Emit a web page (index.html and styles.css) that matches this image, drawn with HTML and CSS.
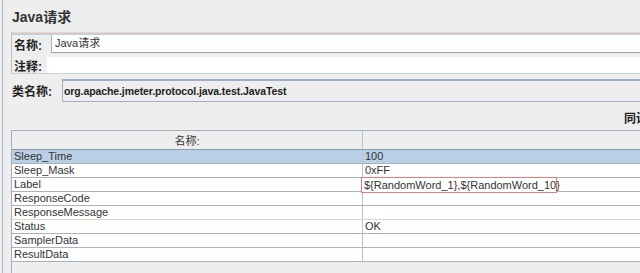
FILE: index.html
```html
<!DOCTYPE html>
<html lang="zh-CN">
<head>
  <meta charset="UTF-8" />
  <title>Java请求</title>
  <link rel="stylesheet" href="styles.css">
</head>
<body>
  <div class="panel">
    <h1>Java请求</h1>
    <div class="names">
      <div class="row row-name">
        <span class="label">名称:</span>
        <span class="input">Java请求</span>
      </div>
      <div class="row row-comment">
        <span class="label">注释:</span>
        <span class="input"></span>
      </div>
    </div>
    <div class="classrow">
      <span class="label">类名称:</span>
      <span class="combo">org.apache.jmeter.protocol.java.test.JavaTest</span>
    </div>
    <div class="sendrow">同请求一起发送参数</div>
    <div class="scroll">
      <table class="params">
        <thead>
          <tr><th class="c1">名称:</th><th class="c2"></th></tr>
        </thead>
        <tbody>
          <tr class="selected"><td>Sleep_Time</td><td>100</td></tr>
          <tr><td>Sleep_Mask</td><td>0xFF</td></tr>
          <tr><td>Label</td><td class="editing"><span class="editor">${RandomWord_1},${RandomWord_10}</span></td></tr>
          <tr><td>ResponseCode</td><td></td></tr>
          <tr class="focus-line"><td>ResponseMessage</td><td></td></tr>
          <tr><td>Status</td><td>OK</td></tr>
          <tr><td>SamplerData</td><td></td></tr>
          <tr><td>ResultData</td><td></td></tr>
        </tbody>
      </table>
    </div>
  </div>
</body>
</html>
```

FILE: styles.css
```css
html, body {
  margin: 0;
  padding: 0;
}
body {
  width: 640px;
  height: 273px;
  overflow: hidden;
  background: #eeeeee;
  font-family: "Liberation Sans", "Noto Sans CJK SC", sans-serif;
  color: #333333;
}
.panel {
  margin-left: 2px;
  border-left: 1px solid #a9b7c9;
  padding-left: 8px;
  height: 273px;
  box-sizing: border-box;
  width: 760px;
}
h1 {
  margin: 0;
  padding: 7px 0 5px 1px;
  font-size: 14px;
  line-height: 20px;
  font-weight: bold;
  color: #333333;
}
.names {
  border-top: 1px solid #f1d4bd;
  border-left: 1px solid #b4c0ce;
  border-bottom: 1px solid #c9d0da;
}
.row {
  display: flex;
  align-items: stretch;
}
.row .label {
  font-size: 12px;
  font-weight: bold;
  color: #222222;
  padding-left: 2px;
  display: flex;
  align-items: center;
}
.row-name {
  border-top: 2px solid #c8ced8;
  height: 18px;
}
.row-name .label {
  width: 37px;
}
.row-name .input {
  flex: 1;
  background: #ffffff;
  border-left: 1px solid #a3b3c6;
  border-bottom: 1px solid #9aa5b3;
  font-size: 11px;
  line-height: 17px;
  padding-left: 3px;
  color: #333333;
}
.row-comment {
  margin-top: 4px;
  height: 16px;
}
.row-comment .label {
  width: 33px;
}
.row-comment .input {
  flex: 1;
  background: #ffffff;
}
.classrow {
  display: flex;
  margin-top: 5px;
  height: 23px;
}
.classrow .label {
  width: 50px;
  padding-left: 1px;
  font-size: 12px;
  font-weight: bold;
  color: #222222;
  display: flex;
  align-items: center;
}
.combo {
  flex: 1;
  border: 1px solid #9fafc3;
  border-top-width: 2px;
  background: #eeeeee;
  font-size: 10.5px;
  letter-spacing: -0.1px;
  font-weight: bold;
  color: #222222;
  line-height: 20px;
  padding-left: 1px;
}
.sendrow {
  margin-top: 10px;
  margin-bottom: 4px;
  height: 14px;
  line-height: 14px;
  padding-left: 613px;
  font-size: 12px;
  font-weight: bold;
  white-space: nowrap;
  color: #222222;
}
.scroll {
  border-top: 1px solid #a3b0c0;
  border-left: 1px solid #9fadbe;
  height: 143px;
}
.params {
  border-collapse: collapse;
  width: 720px;
  table-layout: fixed;
  font-size: 11px;
}
.params th {
  height: 18px;
  padding: 0;
  font-weight: normal;
  font-size: 11px;
  color: #333333;
  background: #eeeeee;
  border-bottom: 1px solid #8e9bab;
  text-align: center;
}
.params .c1 {
  width: 350px;
  border-right: 1px solid #b3c4d8;
}
.params td {
  height: 13px;
  line-height: 13px;
  padding: 0 0 0 2px;
  background: #ffffff;
  border-bottom: 1px solid #a8b3c1;
  white-space: nowrap;
  color: #333333;
}
.params td:first-child {
  border-right: 1px solid #b3c4d8;
}
.params tr.selected td {
  background: #b8cfe5;
}
.params tr.focus-line td {
  border-bottom-color: #e9d3c4;
}
.params td.editing {
  position: relative;
}
.editor {
  position: absolute;
  left: -2px;
  top: -1px;
  height: 14px;
  line-height: 14px;
  padding: 0 2px;
  width: 190px;
  border: 1px solid #e77a7a;
  background: #ffffff;
}
```
